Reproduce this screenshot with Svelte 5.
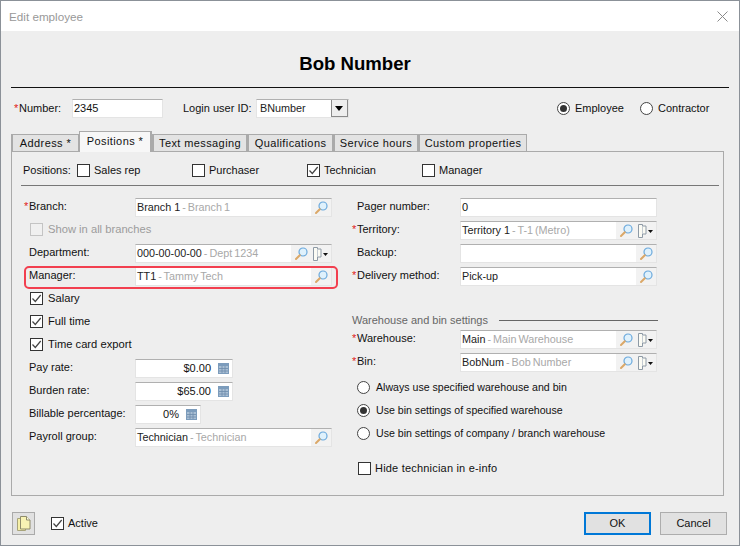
<script>
	const tabs = [
		{ label: 'Address *', width: 68 },
		{ label: 'Positions *', width: 73, active: true },
		{ label: 'Text messaging', width: 95 },
		{ label: 'Qualifications', width: 86 },
		{ label: 'Service hours', width: 85 },
		{ label: 'Custom properties', width: 109 }
	];
	const positions = [
		{ label: 'Sales rep', checked: false },
		{ label: 'Purchaser', checked: false },
		{ label: 'Technician', checked: true },
		{ label: 'Manager', checked: false }
	];
	const radios = [
		{ label: 'Always use specified warehouse and bin', on: false },
		{ label: 'Use bin settings of specified warehouse', on: true },
		{ label: 'Use bin settings of company / branch warehouse', on: false }
	];
</script>

{#snippet check(checked, disabled = false)}
	<span class="box" class:disabled>
		{#if checked}
			<svg width="11" height="11" viewBox="0 0 11 11"><path d="M1.5 5.5 4.3 8.5 9.7 2" fill="none" stroke="#444" stroke-width="1.2" /></svg>
		{/if}
	</span>
{/snippet}

{#snippet radio(on)}
	<span class="radio">
		{#if on}<span class="dot"></span>{/if}
	</span>
{/snippet}

{#snippet lens()}
	<svg class="icon" width="16" height="16" viewBox="0 0 16 16">
		<circle cx="10" cy="6" r="4" fill="#dff1fc" stroke="#6ba9dc" stroke-width="1.2" />
		<path d="M6.800 9.200 3 13" stroke="#dba868" stroke-width="2" stroke-linecap="round" />
	</svg>
{/snippet}

{#snippet flag()}
	<svg class="icon" width="18" height="16" viewBox="0 0 18 16">
		<path d="M2.500 1.500h4v1.500h3.500v8H6.500v3.500h-4z" fill="#fbfbf4" stroke="#8e9aa6" />
		<path d="M6.500 3v8" stroke="#c4cbd2" />
		<path d="M12 7h5l-2.500 3z" fill="#111" />
	</svg>
{/snippet}

{#snippet calc()}
	<svg class="icon calc" width="11" height="11" viewBox="0 0 11 11">
		<rect width="11" height="11" fill="#7c9cbc" />
		<rect x="1" y="3" width="9" height="7" fill="#a9bfd4" />
		<path d="M4 3v7M7 3v7M1 5.500h9M1 8h9" stroke="#6d8cab" stroke-width="0.8" />
	</svg>
{/snippet}

{#snippet lookup(code, desc, extra = false)}
	<div class="input lookup">
		<span class="value">{code}{#if desc}<span class="desc">{' - ' + desc}</span>{/if}</span>
		<span class="tools">
			{@render lens()}
			{#if extra}{@render flag()}{/if}
		</span>
	</div>
{/snippet}

{#snippet label(text, required = false)}
	<span class="label">{#if required}<span class="req">*</span>{/if}{text}</span>
{/snippet}

<div class="window">
	<div class="titlebar">
		<span>Edit employee</span>
		<svg width="11" height="11" viewBox="0 0 11 11"><path d="M.5.500l10 10M10.500.500l-10 10" stroke="#8a8a8a" fill="none" /></svg>
	</div>

	<div class="body">
		<h1>Bob Number</h1>

		<div class="top-row">
			<span class="number-label">{@render label('Number:', true)}</span>
			<div class="input number">2345</div>
			<span class="login-label">Login user ID:</span>
			<div class="input select">
				<span class="value">BNumber</span>
				<span class="arrow"></span>
			</div>
			<div class="kind">
				<span class="opt employee">{@render radio(true)} Employee</span>
				<span class="opt contractor">{@render radio(false)} Contractor</span>
			</div>
		</div>

		<div class="tabs">
			{#each tabs as tab}
				<div class="tab" class:active={tab.active} style="width: {tab.width}px">{tab.label}</div>
			{/each}
		</div>

		<div class="panel">
			<div class="positions">
				<span class="positions-label">Positions:</span>
				{#each positions as p}
					<span class="opt pos">{@render check(p.checked)} {p.label}</span>
				{/each}
			</div>

			<div class="columns">
				<div class="col left">
					<div class="row">{@render label('Branch:', true)}{@render lookup('Branch 1', 'Branch 1')}</div>
					<div class="row check-row muted">{@render check(false, true)} Show in all branches</div>
					<div class="row">{@render label('Department:')}{@render lookup('000-00-00-00', 'Dept 1234', true)}</div>
					<div class="row highlighted">{@render label('Manager:')}{@render lookup('TT1', 'Tammy Tech')}</div>
					<div class="row check-row">{@render check(true)} Salary</div>
					<div class="row check-row">{@render check(true)} Full time</div>
					<div class="row check-row">{@render check(true)} Time card export</div>
					<div class="row">
						{@render label('Pay rate:')}
						<div class="input money"><span class="amount">$0.00</span>{@render calc()}</div>
					</div>
					<div class="row">
						{@render label('Burden rate:')}
						<div class="input money"><span class="amount">$65.00</span>{@render calc()}</div>
					</div>
					<div class="row">
						{@render label('Billable percentage:')}
						<div class="input percent"><span class="amount">0%</span>{@render calc()}</div>
					</div>
					<div class="row">{@render label('Payroll group:')}{@render lookup('Technician', 'Technician')}</div>
				</div>

				<div class="col right">
					<div class="row">{@render label('Pager number:')}<div class="input">0</div></div>
					<div class="row">{@render label('Territory:', true)}{@render lookup('Territory 1', 'T-1 (Metro)', true)}</div>
					<div class="row">{@render label('Backup:')}{@render lookup('', '')}</div>
					<div class="row">{@render label('Delivery method:', true)}{@render lookup('Pick-up', '')}</div>

					<div class="group-title"><span>Warehouse and bin settings</span><i></i></div>

					<div class="row">{@render label('Warehouse:', true)}{@render lookup('Main', 'Main Warehouse', true)}</div>
					<div class="row">{@render label('Bin:', true)}{@render lookup('BobNum', 'Bob Number', true)}</div>

					<div class="radios">
						{#each radios as r}
							<div class="row radio-row">{@render radio(r.on)} {r.label}</div>
						{/each}
					</div>

					<div class="row hide-row">{@render check(false)} Hide technician in e-info</div>
				</div>
			</div>
		</div>

		<div class="footer">
			<button class="doc" aria-label="Notes">
				<svg width="16" height="17" viewBox="0 0 16 17">
					<path d="M1.500 3.500h8v12h-8z" fill="#f6f0a8" stroke="#a8a47a" />
					<path d="M4.500 1.500h6l3.500 3.500v9h-9.500z" fill="#f8f3b4" stroke="#8f8c6c" />
					<path d="M10.500 1.500v3.500h3.500" fill="#fffde0" stroke="#8f8c6c" />
				</svg>
			</button>
			<span class="opt active-check">{@render check(true)} Active</span>
			<button class="btn primary">OK</button>
			<button class="btn">Cancel</button>
		</div>
	</div>
</div>

<style>
	:global(body) {
		margin: 0;
	}

	.window {
		width: 740px;
		height: 546px;
		box-sizing: border-box;
		border: 1px solid #8b9198;
		display: flex;
		flex-direction: column;
		background: #eeeeee;
		font: 11px/15px 'Liberation Sans', sans-serif;
		color: #111;
		overflow: hidden;
	}

	.titlebar {
		height: 30px;
		box-sizing: border-box;
		padding: 1px 11px 0 8px;
		flex: none;
		background: #fff;
		color: #999;
		font-size: 11.7px;
		display: flex;
		align-items: center;
		justify-content: space-between;
	}

	.body {
		flex: 1;
		padding: 0 10px;
		position: relative;
	}

	h1 {
		margin: 0;
		height: 57px;
		box-sizing: border-box;
		padding: 21px 30px 0 0;
		text-align: center;
		font: bold 18.6px/24px 'Liberation Sans', sans-serif;
		color: #000;
		border-bottom: 1px solid #111;
		width: 718px;
	}

	.top-row {
		display: flex;
		align-items: center;
		height: 20px;
		margin-top: 10px;
	}

	.number-label {
		width: 58px;
		flex: none;
		margin-left: 3px;
	}

	.number {
		width: 91px;
		flex: none;
		margin-right: 20px;
	}

	.login-label {
		width: 73px;
		flex: none;
		white-space: nowrap;
	}

	.select {
		width: 93px;
		flex: none;
		justify-content: space-between;
		padding-right: 0;
	}

	.select .value {
		padding-left: 2px;
	}

	.arrow {
		width: 15px;
		height: 16px;
		border: 1px solid #8a8a8a;
		background: #eeeeee;
		position: relative;
	}

	.arrow::after {
		content: '';
		position: absolute;
		left: 3px;
		top: 6px;
		border: 4px solid transparent;
		border-top: 5px solid #000;
		border-bottom: 0;
	}

	.kind {
		display: flex;
		margin-left: auto;
		margin-right: 16px;
	}

	.opt {
		display: inline-flex;
		align-items: center;
		gap: 5px;
	}

	.employee {
		width: 83px;
	}

	.contractor {
		width: 73px;
	}

	.tabs {
		display: flex;
		align-items: flex-end;
		height: 24px;
		margin-top: 9px;
	}

	.tab {
		height: 17px;
		box-sizing: border-box;
		flex: none;
		text-align: center;
		background: #e3e3e3;
		border: 1px solid #aaa;
		border-bottom: 0;
		border-left-width: 2px;
		line-height: 17px;
		letter-spacing: 0.4px;
		white-space: nowrap;
	}

	.tab.active {
		height: 21px;
		background: #f7f7f7;
		border-width: 1px 2px 0 1px;
		margin-bottom: -1px;
		position: relative;
		line-height: 18px;
		z-index: 1;
	}

	.panel {
		width: 713px;
		height: 345px;
		box-sizing: border-box;
		border: 1px solid #aaa;
		padding: 0 4px 0 9px;
	}

	.positions {
		display: flex;
		align-items: center;
		height: 34px;
		box-sizing: border-box;
		padding-top: 3px;
		border-bottom: 1px solid #777;
	}

	.positions-label {
		width: 54px;
		margin-left: 2px;
		flex: none;
	}

	.pos {
		width: 115px;
		flex: none;
		gap: 4px;
	}

	.columns {
		display: flex;
		padding-top: 10px;
	}

	.col.left {
		width: 308px;
		margin-left: 3px;
		margin-right: 20px;
	}

	.col.right {
		width: 306px;
	}

	.row {
		display: grid;
		grid-template-columns: 111px 1fr;
		align-items: center;
		height: 23px;
		position: relative;
	}

	.right .row {
		grid-template-columns: 108px 197px;
	}

	.check-row,
	.right .radio-row,
	.right .hide-row {
		display: flex;
		gap: 5px;
	}

	.check-row {
		font-size: 11.2px;
		padding-left: 6px;
		padding-bottom: 2px;
		box-sizing: border-box;
	}

	.muted {
		color: #9c9c9c;
	}

	.radios {
		margin-top: 2px;
	}

	.right .radio-row {
		font-size: 10.6px;
		gap: 6px;
		padding-left: 5px;
	}

	.right .hide-row {
		margin-top: 12px;
		padding-left: 6px;
		gap: 4px;
		letter-spacing: 0.2px;
	}

	.highlighted::after {
		content: '';
		position: absolute;
		left: 0;
		right: -6px;
		top: 1px;
		bottom: -1px;
		border: 2px solid #f23f4f;
		border-radius: 5px;
		pointer-events: none;
	}

	.label {
		padding-left: 5px;
		padding-bottom: 2px;
		white-space: nowrap;
	}

	.req {
		display: inline-block;
		width: 5px;
		margin-left: -5px;
		color: #e02020;
	}

	.input {
		height: 19px;
		box-sizing: border-box;
		background: #fff;
		border: 1px solid #e4e4e4;
		border-top-color: #b0b0b0;
		display: flex;
		align-items: center;
		padding-left: 1px;
		white-space: nowrap;
		overflow: hidden;
	}

	.value {
		flex: 1;
		color: #222;
		font-size: 10.8px;
	}

	.desc {
		color: #a8a8a8;
		word-spacing: -1px;
	}

	.tools {
		display: flex;
		align-items: center;
		height: 100%;
		background: #f2f2f2;
		padding: 0 2px;
		gap: 2px;
	}

	.icon {
		flex: none;
	}

	.money,
	.percent {
		justify-content: flex-end;
		padding-right: 3px;
		gap: 7px;
	}

	.money {
		width: 98px;
	}

	.percent {
		width: 66px;
	}

	.group-title {
		display: flex;
		align-items: center;
		gap: 11px;
		height: 15px;
		margin-top: 25px;
		color: #666;
		width: 306px;
	}

	.group-title i {
		flex: 1;
		height: 1px;
		background: #666;
	}

	.box {
		width: 13px;
		height: 13px;
		box-sizing: border-box;
		flex: none;
		border: 1px solid #333;
		background: #fff;
		display: inline-flex;
		align-items: center;
		justify-content: center;
	}

	.box.disabled {
		border-color: #c4c4c4;
		background: #f0f0f0;
	}

	.radio {
		width: 13px;
		height: 13px;
		box-sizing: border-box;
		flex: none;
		border: 1px solid #444;
		border-radius: 50%;
		background: #fff;
		display: inline-flex;
		align-items: center;
		justify-content: center;
	}

	.dot {
		width: 7px;
		height: 7px;
		border-radius: 50%;
		background: #333;
	}

	.footer {
		display: flex;
		align-items: center;
		margin-top: 16px;
		height: 23px;
	}

	.doc {
		width: 23px;
		height: 23px;
		margin-left: 1px;
		padding: 0;
		border: 1px solid #aaa;
		background: #e1e1e1;
		display: flex;
		align-items: center;
		justify-content: center;
	}

	.active-check {
		margin-left: 16px;
		margin-right: auto;
		gap: 4px;
	}

	.btn {
		width: 67px;
		height: 23px;
		box-sizing: border-box;
		border: 1px solid #adadad;
		background: #e1e1e1;
		font: inherit;
		color: #111;
		padding: 0;
		margin-left: 9px;
		margin-right: 2px;
	}

	.btn.primary {
		border: 2px solid #0078d7;
		margin-right: 0;
	}
</style>
